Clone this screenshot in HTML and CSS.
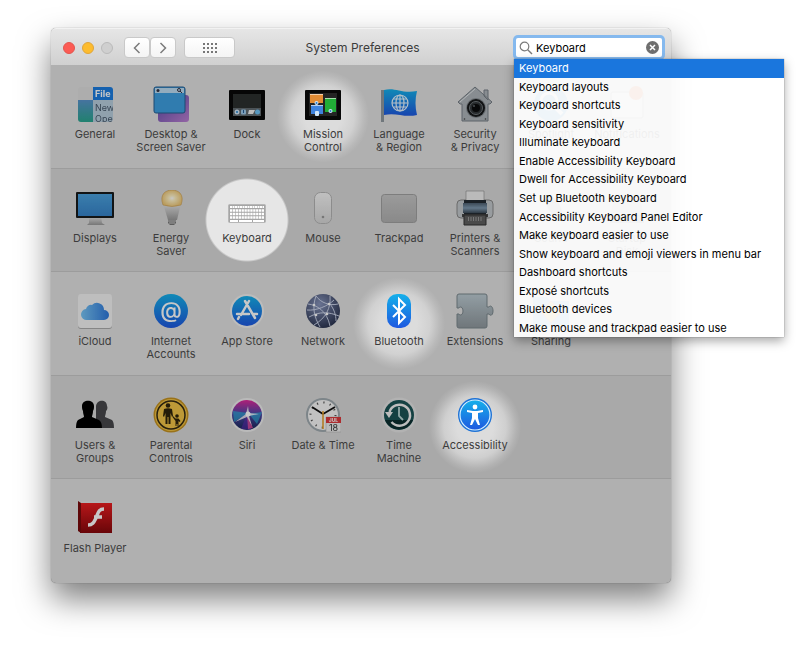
FILE: index.html
```
<!DOCTYPE html>
<html lang="en">
<head>
  <meta charset="UTF-8">
  <meta name="viewport" content="width=device-width, initial-scale=1.0">
  <title>System Preferences</title>
  <link rel="stylesheet" href="styles.css">
</head>
<body>
  <!-- shared gradients -->
  <svg class="defs" width="0" height="0" aria-hidden="true">
    <defs>
      <linearGradient id="blue" x1="0" y1="0" x2="0" y2="1"><stop offset="0" stop-color="#15b0ea"/><stop offset="1" stop-color="#1e58e0"/></linearGradient>
      <linearGradient id="screen" x1="0" y1="0" x2="0" y2="1"><stop offset="0" stop-color="#4ba2de"/><stop offset="1" stop-color="#3683c9"/></linearGradient>
      <linearGradient id="grey" x1="0" y1="0" x2="0" y2="1"><stop offset="0" stop-color="#e8e8e8"/><stop offset="1" stop-color="#999"/></linearGradient>
      <linearGradient id="pad" x1="0" y1="0" x2="0" y2="1"><stop offset="0" stop-color="#c6c6c6"/><stop offset="1" stop-color="#b0b0b0"/></linearGradient>
      <linearGradient id="shell" x1="0" y1="0" x2="0" y2="1"><stop offset="0" stop-color="#f6f6f6"/><stop offset="1" stop-color="#d6d6d6"/></linearGradient>
      <linearGradient id="purple" x1="0" y1="0" x2="1" y2="1"><stop offset="0" stop-color="#5948a8"/><stop offset="1" stop-color="#bc80d2"/></linearGradient>
      <linearGradient id="teal" x1="0" y1="0" x2="0" y2="1"><stop offset="0" stop-color="#5994cc"/><stop offset="1" stop-color="#2aa58e"/></linearGradient>
      <linearGradient id="cloud" x1="0" y1="0" x2="1" y2="0"><stop offset="0" stop-color="#78c5f5"/><stop offset="1" stop-color="#2d78dc"/></linearGradient>
      <linearGradient id="red" x1="0" y1="0" x2="0" y2="1"><stop offset="0" stop-color="#ea1d20"/><stop offset="1" stop-color="#86070b"/></linearGradient>
      <linearGradient id="puzzle" x1="0" y1="0" x2="0" y2="1"><stop offset="0" stop-color="#bccbd2"/><stop offset="1" stop-color="#8f989d"/></linearGradient>
      <linearGradient id="steel" x1="0" y1="0" x2="0" y2="1"><stop offset="0" stop-color="#4d5f70"/><stop offset=".5" stop-color="#7f99b0"/><stop offset="1" stop-color="#3d4b58"/></linearGradient>
      <radialGradient id="globe" cx=".4" cy=".3" r=".75"><stop offset="0" stop-color="#8794bb"/><stop offset="1" stop-color="#27304c"/></radialGradient>
      <radialGradient id="bulb"><stop offset="0" stop-color="#fff"/><stop offset=".3" stop-color="#fff1c4"/><stop offset="1" stop-color="#eec878"/></radialGradient>
      <linearGradient id="siri" x1="0" y1="0" x2="0" y2="1"><stop offset="0" stop-color="#e0289a"/><stop offset=".45" stop-color="#5047a8"/><stop offset="1" stop-color="#172858"/></linearGradient>
    </defs>
  </svg>

  <main class="window">
    <header class="titlebar">
      <div class="tools">
        <div class="lights">
          <button class="light close" aria-label="Close"></button>
          <button class="light minimise" aria-label="Minimise"></button>
          <button class="light zoom" aria-label="Zoom" disabled></button>
        </div>
        <div class="nav">
          <button class="tool" aria-label="Back"><svg width="8" height="12" viewBox="0 0 8 12"><path d="M6.500 1L1.500 6l5 5" fill="none" stroke="#7a7a7a" stroke-width="1.500"/></svg></button>
          <button class="tool" aria-label="Forward"><svg width="8" height="12" viewBox="0 0 8 12"><path d="M1.500 1l5 5-5 5" fill="none" stroke="#7a7a7a" stroke-width="1.500"/></svg></button>
        </div>
        <button class="tool show-all" aria-label="Show All">
          <svg width="14" height="10" viewBox="0 0 14 10"><path d="M0 1h14M0 5h14M0 9h14" stroke="#777" stroke-width="2" stroke-dasharray="2 2"/></svg>
        </button>
      </div>
      <h1 class="title">System Preferences</h1>
      <div class="search">
        <label class="field">
          <svg width="14" height="14" viewBox="0 0 14 14"><circle cx="5.500" cy="5.500" r="4.300" fill="none" stroke="#7b7b7b" stroke-width="1.200"/><path d="M8.700 8.700l4.300 4.300" stroke="#7b7b7b" stroke-width="1.400"/></svg>
          <input type="text" value="Keyboard" aria-label="Search">
        </label>
        <button class="clear" aria-label="Clear search"><svg width="13" height="13" viewBox="0 0 13 13"><circle cx="6.500" cy="6.500" r="6.500" fill="#6f6f6f"/><path d="M4 4l5 5M9 4L4 9" stroke="#fff" stroke-width="1.500"/></svg></button>
        <ul class="results">
          <li><button class="result selected">Keyboard</button></li>
          <li><button class="result">Keyboard layouts</button></li>
          <li><button class="result">Keyboard shortcuts</button></li>
          <li><button class="result">Keyboard sensitivity</button></li>
          <li><button class="result">Illuminate keyboard</button></li>
          <li><button class="result">Enable Accessibility Keyboard</button></li>
          <li><button class="result">Dwell for Accessibility Keyboard</button></li>
          <li><button class="result">Set up Bluetooth keyboard</button></li>
          <li><button class="result">Accessibility Keyboard Panel Editor</button></li>
          <li><button class="result">Make keyboard easier to use</button></li>
          <li><button class="result">Show keyboard and emoji viewers in menu bar</button></li>
          <li><button class="result">Dashboard shortcuts</button></li>
          <li><button class="result">Exposé shortcuts</button></li>
          <li><button class="result">Bluetooth devices</button></li>
          <li><button class="result">Make mouse and trackpad easier to use</button></li>
        </ul>
      </div>
    </header>

    <div class="panes">
      <section class="row">
        <a class="pane" href="#">
          <svg class="icon" viewBox="0 0 36 36"><clipPath id="gen"><rect x="1" y="1" width="35" height="35" rx="3"/></clipPath><g clip-path="url(#gen)"><path fill="#dedede" d="M1 1h15v13H1z"/><path fill="#1b7ce0" d="M16 1h20v13H16z"/><path fill="url(#teal)" d="M1 14h15v22H1z"/><path fill="#b9cede" d="M16 14h20v22H16z"/><text x="18" y="11" font-size="9" font-weight="700" fill="#fff">File</text><text x="18" y="25" font-size="9" fill="#47596b">New</text><text x="18" y="36" font-size="9" fill="#47596b">Ope</text></g></svg>
          <span>General</span>
        </a>
        <a class="pane" href="#">
          <svg class="icon" viewBox="0 0 36 36"><rect x="5" y="9" width="31" height="27" rx="3" fill="url(#purple)"/><rect x="1" y="1" width="31" height="26" rx="2" fill="#3d9fe0" stroke="#275e91"/><path fill="#bddcf2" d="M2 2h29v5H2z"/><circle cx="5" cy="4.500" r="1.500" fill="#334"/><circle cx="26" cy="4" r="1.500" fill="none" stroke="#334"/><path d="M27 5l2 2" stroke="#334"/></svg>
          <span>Desktop &amp;<br>Screen Saver</span>
        </a>
        <a class="pane" href="#">
          <svg class="icon" viewBox="0 0 36 36"><rect x="0" y="4" width="36" height="30" rx="1" fill="#080808"/><path fill="#2b2f2e" d="M4 8h28v14H4z"/><path fill="#616a70" d="M4 22h28v8H4z"/><circle cx="8" cy="26" r="2.500" fill="#d4e6f5"/><circle cx="8" cy="26" r="1" fill="#2486cc"/><rect x="12" y="23.500" width="5" height="5" rx="1" fill="#9ec9ea"/><path d="M14.500 24v3" stroke="#225a94"/><path fill="#f1f1f1" d="M20 24h6l-2 4h-5z"/><circle cx="28.500" cy="26" r="2.500" fill="#6fc1f4"/></svg>
          <span>Dock</span>
        </a>
        <a class="pane lit" href="#">
          <svg class="icon" viewBox="0 0 36 36"><rect x="0" y="4" width="36" height="30" rx="1" fill="#080808"/><path fill="#242424" d="M4 7h28v23H4z"/><path fill="#e28c35" d="M5 8h13v9H5z"/><path fill="#3f83dd" d="M6 19h12v9H6z"/><path fill="#22ad37" d="M20 12h11v14H20z"/><path stroke="#fff" stroke-opacity=".6" d="M5 8.500h13M6 19.500h12M20 12.500h11"/><circle cx="11.500" cy="17" r="2" fill="#cfe6fa"/><circle cx="25.500" cy="25" r="2" fill="#cfe6fa"/><rect x="10" y="25" width="4" height="5" rx="1" fill="#cfe6fa"/><circle cx="11.500" cy="17" r="1" fill="#2b7cc7"/><circle cx="25.500" cy="25" r="1" fill="#2b7cc7"/></svg>
          <span>Mission<br>Control</span>
        </a>
        <a class="pane" href="#">
          <svg class="icon" viewBox="0 0 36 36"><path d="M1.500 4v32" stroke="#8f989f" stroke-width="3"/><path fill="url(#blue)" d="M3 4c11-3 18 4 33 1-2 8-2 16 0 24-13 3-21-3-33 0z"/><g fill="none" stroke="#e7f5ff" stroke-width="1.200"><circle cx="19" cy="17" r="8"/><ellipse cx="19" cy="17" rx="4" ry="8"/><path d="M19 9v16M11 17h16M12.500 13h13M12.500 21h13"/></g></svg>
          <span>Language<br>&amp; Region</span>
        </a>
        <a class="pane" href="#">
          <svg class="icon" viewBox="0 0 36 36"><path fill="#aeb5ba" stroke="#777f86" d="M27 10V4h4v10zM18 1L1 16l2 2h2v17h26V18h2l2-2z"/><path d="M18 3L3 16" stroke="#e3e7e9"/><circle cx="19" cy="22" r="10" fill="#858b90"/><circle cx="19" cy="22" r="9" fill="#16181a"/><circle cx="19" cy="22" r="6.500" fill="#303437" stroke="#70777b"/><circle cx="19" cy="22" r="4" fill="#090a0b"/><circle cx="17" cy="20" r="1" fill="#5c6367"/><circle cx="7.500" cy="33" r=".8" fill="#444"/><circle cx="28.500" cy="33" r=".8" fill="#444"/></svg>
          <span>Security<br>&amp; Privacy</span>
        </a>
        <a class="pane" href="#">
          <svg class="icon" viewBox="0 0 36 36"><circle cx="18" cy="18" r="17" fill="#4aa1e8"/><circle cx="16" cy="15" r="8" fill="none" stroke="#fff" stroke-width="3"/><path d="M22 21l7 7" stroke="#fff" stroke-width="4"/></svg>
          <span>Spotlight</span>
        </a>
        <a class="pane" href="#">
          <svg class="icon" viewBox="0 0 36 36"><rect x="2" y="6" width="32" height="26" rx="2" fill="#eee" stroke="#999"/><circle cx="27" cy="7" r="7" fill="#f36b28"/></svg>
          <span>Notifications</span>
        </a>
      </section>

      <section class="row alt">
        <a class="pane" href="#">
          <svg class="icon wide" viewBox="0 0 38 36"><path fill="url(#grey)" d="M13 26h12l1 7 3 2H11l2-2z"/><rect x="0" y="2" width="38" height="26" rx="1" fill="#17191b"/><path fill="url(#screen)" d="M2 4h34v22H2z"/></svg>
          <span>Displays</span>
        </a>
        <a class="pane" href="#">
          <svg class="icon" viewBox="0 0 36 36"><path fill="url(#grey)" d="M10 13h18l-4 17h-9z"/><path fill="url(#bulb)" stroke="#c99c50" stroke-width=".6" d="M10 15C6 4 13 0 19 0s13 4 9 15q-9 3-18 0z"/><path fill="#777" d="M15 30h8v3l-2 2h-4l-2-2z"/><path d="M15 31h8M16 33h6" stroke="#ccc"/></svg>
          <span>Energy<br>Saver</span>
        </a>
        <a class="pane spot" href="#">
          <svg class="icon wide" viewBox="0 0 38 36"><rect x=".5" y="14.500" width="37" height="18" rx="1" fill="#a5a5a5" stroke="#b7b7b7"/><path d="M2 17h34" stroke="#fff" stroke-width="2" stroke-dasharray="2 .5"/><path d="M2 20.500h34M2 24h34M2 27.500h34" stroke="#fff" stroke-width="2.500" stroke-dasharray="2.300 .6"/><path d="M2 31h8M11 31h13M25 31h11" stroke="#fff" stroke-width="2"/></svg>
          <span>Keyboard</span>
        </a>
        <a class="pane" href="#">
          <svg class="icon" viewBox="0 0 36 36"><rect x="9.500" y="2.500" width="17" height="31" rx="6" fill="url(#shell)" stroke="#b4b4b4"/><circle cx="18" cy="27" r="1.300" fill="#999"/></svg>
          <span>Mouse</span>
        </a>
        <a class="pane" href="#">
          <svg class="icon" viewBox="0 0 36 36"><rect x=".5" y="4.500" width="35" height="28" rx="3" fill="url(#pad)" stroke="#a0a0a0"/></svg>
          <span>Trackpad</span>
        </a>
        <a class="pane" href="#">
          <svg class="icon wide" viewBox="0 0 38 36"><rect x="1" y="10" width="36" height="18" rx="4" fill="#c3c8cc" stroke="#888"/><path fill="#eee" stroke="#777" stroke-width=".5" d="M10 1h18v10H10z"/><path fill="#222a32" d="M8 10h22v15H8z"/><path fill="url(#steel)" d="M7 13h24v10H7z"/><path fill="#454545" d="M6 24h26v3H6z"/><path fill="#5f5f5f" stroke="#333" d="M8 25h22v10H8z"/><path d="M12 29h14" stroke="#999" stroke-width="4" stroke-dasharray="1 1.500"/></svg>
          <span>Printers &amp;<br>Scanners</span>
        </a>
        <a class="pane" href="#">
          <svg class="icon" viewBox="0 0 36 36"><ellipse cx="18" cy="18" rx="10" ry="16" fill="#ccc" transform="rotate(-30 18 18)"/><ellipse cx="21" cy="17" rx="6" ry="12" fill="#888" transform="rotate(-30 21 17)"/></svg>
          <span>Sound</span>
        </a>
        <a class="pane" href="#">
          <svg class="icon" viewBox="0 0 36 36"><path fill="#bbb" d="M6 4h24l5 21v8H1v-8z"/><path fill="#888" d="M1 25h34v8H1z"/></svg>
          <span>Startup<br>Disk</span>
        </a>
      </section>

      <section class="row">
        <a class="pane" href="#">
          <svg class="icon" viewBox="0 0 36 36"><rect x="1" y="2" width="34" height="34" rx="3" fill="#aaa"/><rect x="1" y="1" width="34" height="34" rx="3" fill="#f4f4f4"/><path fill="url(#cloud)" d="M10 27a5.500 5.500 0 0 1-1-11 5 5 0 0 1 6-4 7 7 0 0 1 12 5 5 5 0 0 1 0 10z"/></svg>
          <span>iCloud</span>
        </a>
        <a class="pane" href="#">
          <svg class="icon" viewBox="0 0 36 36"><circle cx="18" cy="18" r="17" fill="url(#blue)"/><text x="18" y="25" font-size="22" font-weight="500" text-anchor="middle" fill="#fff">@</text></svg>
          <span>Internet<br>Accounts</span>
        </a>
        <a class="pane" href="#">
          <svg class="icon" viewBox="0 0 36 36"><circle cx="18" cy="18" r="17" fill="#f1f1f1"/><circle cx="18" cy="18" r="15" fill="url(#blue)"/><g fill="none" stroke="#fff" stroke-width="2.500" stroke-linecap="round"><path d="M20 8l-8 14M16 8l10 17M8 21h12M24 21h4M10 24l-1 2"/></g></svg>
          <span>App Store</span>
        </a>
        <a class="pane" href="#">
          <svg class="icon" viewBox="0 0 36 36"><circle cx="18" cy="18" r="17" fill="url(#globe)"/><g fill="none" stroke="#d6def2" stroke-width=".9"><path d="M3 11c9 1 19 7 22 22M11 3C7 14 9 24 15 34M4 24c11-6 20-5 30-1M11 3c5 7 14 10 22 8M25 3c1 12-4 22-16 29M2 17c9 1 21-4 27-10M25 11c4 5 6 11 6 17"/></g><g fill="#fff"><circle cx="9" cy="12" r="1.300"/><circle cx="24" cy="11" r="1.300"/><circle cx="22" cy="21" r="1.300"/><circle cx="11" cy="22" r="1.300"/></g></svg>
          <span>Network</span>
        </a>
        <a class="pane lit" href="#">
          <svg class="icon" viewBox="0 0 36 36"><rect x="6" y="1" width="24" height="34" rx="10" fill="url(#blue)"/><path d="M12 12l12 12-6 6V6l6 6-12 12" fill="none" stroke="#fff" stroke-width="2"/></svg>
          <span>Bluetooth</span>
        </a>
        <a class="pane" href="#">
          <svg class="icon wide" viewBox="0 0 38 36"><path fill="url(#puzzle)" stroke="#7b878d" d="M3 1h26q2 0 2 2v11h2c1-2 4-1 4 4s-3 5-4 3h-2v12q0 2-2 2H3q-2 0-2-2V21h2c1 2 4 1 4-3s-3-5-4-3H1V3q0-2 2-2z"/></svg>
          <span>Extensions</span>
        </a>
        <a class="pane" href="#">
          <svg class="icon" viewBox="0 0 36 36"><path fill="#65b4ec" d="M0 4h14l3 4h19v26H0z"/><path fill="#f0c43c" stroke="#d66" d="M18 8l10 11-10 11L8 19z"/></svg>
          <span>Sharing</span>
        </a>
      </section>

      <section class="row alt">
        <a class="pane" href="#">
          <svg class="icon wide" viewBox="0 0 38 36"><path fill="#46474a" d="M20 31V9c1-7 11-7 11 0 1 2 0 4-1 5 0 3-1 4-1 6l7 3q2 2 2 8z"/><path d="M0 31q0-6 2-8l6-3c0-2-1-3-1-6-1-2-1-3-1-5C6 2 18 2 18 9c0 2 0 3-1 5 0 3-1 4-1 6l7 3q3 2 3 8z"/></svg>
          <span>Users &amp;<br>Groups</span>
        </a>
        <a class="pane" href="#">
          <svg class="icon" viewBox="0 0 36 36"><circle cx="18" cy="18" r="17.500" fill="#c59220"/><circle cx="18" cy="18" r="16" fill="#f2c446"/><circle cx="18" cy="18" r="14" fill="none" stroke="#332912" stroke-width="1.500"/><g fill="#2e240b"><circle cx="15" cy="8.500" r="2.300"/><path d="M11 12q4-1.500 8 0l1 7-1 1-1.500-4v11h-2v-7h-1v7h-2V16L11 20l-1-1z"/><circle cx="24" cy="19" r="1.800"/><path d="M20 19l2.500 2.500h3l2 2.500-1 1-1-1v5h-1v-2h-1v2h-1v-5l-3-4z"/></g></svg>
          <span>Parental<br>Controls</span>
        </a>
        <a class="pane" href="#">
          <svg class="icon" viewBox="0 0 36 36"><circle cx="18" cy="18" r="17" fill="#eee"/><circle cx="18" cy="18" r="15" fill="url(#siri)"/><path fill="#27b8dc" fill-opacity=".6" d="M4 14l15 2L5 25zM20 17l13-2-5 12z"/><path fill="#5a2bb0" fill-opacity=".6" d="M18 17l4 16-10-1z"/><path fill="#e44d9b" fill-opacity=".8" d="M18 17l6 14-5 1z"/><path fill="#fff" fill-opacity=".8" d="M19 9l1 7 10 1-10 2 3 10-5-9-12 5 11-8z"/><circle cx="19" cy="17" r="2.500" fill="#fff"/></svg>
          <span>Siri</span>
        </a>
        <a class="pane" href="#">
          <svg class="icon" viewBox="0 0 36 36"><circle cx="18" cy="18" r="17" fill="#a0aab0"/><circle cx="18" cy="18" r="15" fill="#f7f7f7"/><circle cx="18" cy="18" r="12.500" fill="none" stroke="#555" stroke-width="2" stroke-dasharray="1.200 5.345"/><path d="M18 17L7 10M18 17l12-7" stroke="#111" stroke-width="1.800"/><path d="M18 14v18" stroke="#e49b22" stroke-width="1.500"/><path fill="#eee" stroke="#aaa" stroke-width=".5" d="M21 20h15v15H21z"/><path fill="#dc383c" d="M21 20h15v6H21z"/><text x="28.500" y="25" font-size="5" font-weight="700" text-anchor="middle" fill="#fff">JUL</text><text x="28.500" y="34" font-size="9" text-anchor="middle" fill="#333">18</text></svg>
          <span>Date &amp; Time</span>
        </a>
        <a class="pane" href="#">
          <svg class="icon" viewBox="0 0 36 36"><circle cx="18" cy="18" r="17.500" fill="#e4e4e4"/><circle cx="18" cy="18" r="15" fill="#1a5355"/><path fill="#0c2e30" d="M4 23a15 15 0 0 0 28 0z"/><path d="M8.500 15a10.500 10.500 0 1 1 2 10" fill="none" stroke="#f2f2f2" stroke-width="2.500"/><path fill="#f2f2f2" d="M4 15h8l-4 6z"/><path d="M18 10v9l4 4" fill="none" stroke="#b9d7d5" stroke-width="1.800"/></svg>
          <span>Time<br>Machine</span>
        </a>
        <a class="pane lit" href="#">
          <svg class="icon" viewBox="0 0 36 36"><circle cx="18" cy="18" r="17" fill="#1d72d6"/><circle cx="18" cy="18" r="15" fill="url(#blue)" stroke="#d5efff" stroke-width="1.200"/><circle cx="18" cy="10" r="2.400" fill="#fff"/><path fill="#fff" d="M10 13l6 1h4l6-1v2l-5 1v5l2 7h-2l-3-6-3 6h-2l2-7v-5l-5-1z"/></svg>
          <span>Accessibility</span>
        </a>
      </section>

      <section class="row">
        <a class="pane" href="#">
          <svg class="icon" viewBox="0 0 36 36"><path fill="#e4e4e4" d="M4 1h28l3 3H3z"/><path fill="url(#red)" d="M3 3h32v30H3z"/><path fill="#780a0c" d="M1 1l3 2v30l-3-2z"/><path d="M27 9c-6 0-6 5-8 9s-3 7-8 7M17 17h8" fill="none" stroke="#fff" stroke-width="3.500"/></svg>
          <span>Flash Player</span>
        </a>
      </section>
    </div>
  </main>
</body>
</html>
```

FILE: styles.css
```
* {
  box-sizing: border-box;
}
body {
  margin: 0;
  padding: 28px 129px 73px 51px;
  background: #fff;
  font-family: Inter, "Liberation Sans", sans-serif;
  font-size: 11px;
  color: #3c3c3c;
}
button {
  font: inherit;
  border: 0;
  padding: 0;
}
svg {
  display: block;
}
.defs {
  position: absolute;
}
.window {
  display: flex;
  flex-direction: column;
  min-height: 555px;
  border-radius: 5px;
  background: #b0b0b0;
  box-shadow: 0 0 1px rgba(0, 0, 0, 0.5), 0 16px 32px rgba(0, 0, 0, 0.5);
}

/* title bar */
.titlebar {
  display: grid;
  grid-template-columns: 1fr auto 1fr;
  align-items: center;
  height: 37px;
  padding: 1px 9px 0 12px;
  border-radius: 5px 5px 0 0;
  border-top: 1px solid #f2f2f2;
  background: linear-gradient(#e6e6e6, #d0d0d0);
}
.tools,
.lights,
.nav {
  display: flex;
  align-items: center;
}
.tools {
  gap: 8px;
}
.lights {
  gap: 7px;
  margin-right: 3px;
}
.light {
  width: 12px;
  height: 12px;
  border-radius: 50%;
}
.close {
  background: #fc5b54;
  border: 1px solid #e2564f;
}
.minimise {
  background: #fdbc2e;
  border: 1px solid #e0a53a;
}
.zoom {
  background: #cfcfcf;
  border: 1px solid #bababa;
}
.tool {
  display: flex;
  align-items: center;
  justify-content: center;
  width: 26px;
  height: 21px;
  border: 1px solid #c9c9c9;
  border-radius: 4px;
  background: linear-gradient(#fff, #f4f4f4);
}
.show-all {
  width: 51px;
}
.title {
  margin: 0;
  font-size: 12px;
  font-weight: 400;
}
.search {
  position: relative;
  justify-self: end;
  display: flex;
  align-items: center;
  width: 146px;
  height: 19px;
  padding: 0 3px;
  border-radius: 2px;
  background: #fff;
  box-shadow: 0 0 0 3px #85b9ee;
}
.field {
  display: flex;
  align-items: center;
  flex: 1;
  gap: 3px;
  min-width: 0;
}
.field input {
  flex: 1;
  min-width: 0;
  border: 0;
  padding: 0;
  outline: 0;
  background: none;
  font: inherit;
  color: #000;
}
.clear {
  background: none;
}

/* search results, drawn over the panes */
.results {
  position: absolute;
  z-index: 2;
  top: 21px;
  left: -2px;
  display: grid;
  grid-auto-rows: 1fr;
  width: 270px;
  min-height: 278px;
  margin: 0;
  padding: 0;
  list-style: none;
  background: rgba(255, 255, 255, 0.92);
  box-shadow: 0 0 1px rgba(0, 0, 0, 0.5), 0 4px 10px rgba(0, 0, 0, 0.35);
}
.results li {
  display: grid;
}
.result {
  padding: 0 5px;
  background: none;
  color: #000;
  text-align: left;
}
.selected {
  background: #1a76dd;
  color: #fff;
}

/* preference panes */
.panes {
  flex: 1;
  display: grid;
  grid-auto-rows: 1fr;
}
.row {
  display: grid;
  grid-template-columns: repeat(8, 1fr);
  padding: 0 6px;
  border-bottom: 1px solid #9c9c9c;
}
.row:last-child {
  border-bottom: 0;
}
.alt {
  background: #a9a9a9;
}
.pane {
  display: flex;
  flex-direction: column;
  align-items: center;
  gap: 6px;
  min-width: 0;
  padding: 21px 0 12px;
  color: inherit;
  text-align: center;
  text-decoration: none;
  line-height: 13px;
  white-space: nowrap;
}
.icon {
  width: 36px;
  height: 36px;
  filter: brightness(0.78);
}
.wide {
  width: 38px;
}
.lit,
.spot {
  margin: 0 -8px;
}
.lit {
  background: radial-gradient(circle, #dcdcdc 18px, rgba(220, 220, 220, 0.75) 31px, rgba(220, 220, 220, 0.2) 41px, rgba(220, 220, 220, 0) 46px);
}
.spot {
  background: radial-gradient(circle, #e6e6e6 40px, rgba(230, 230, 230, 0) 42px);
}
.lit .icon,
.spot .icon {
  filter: none;
}
```
